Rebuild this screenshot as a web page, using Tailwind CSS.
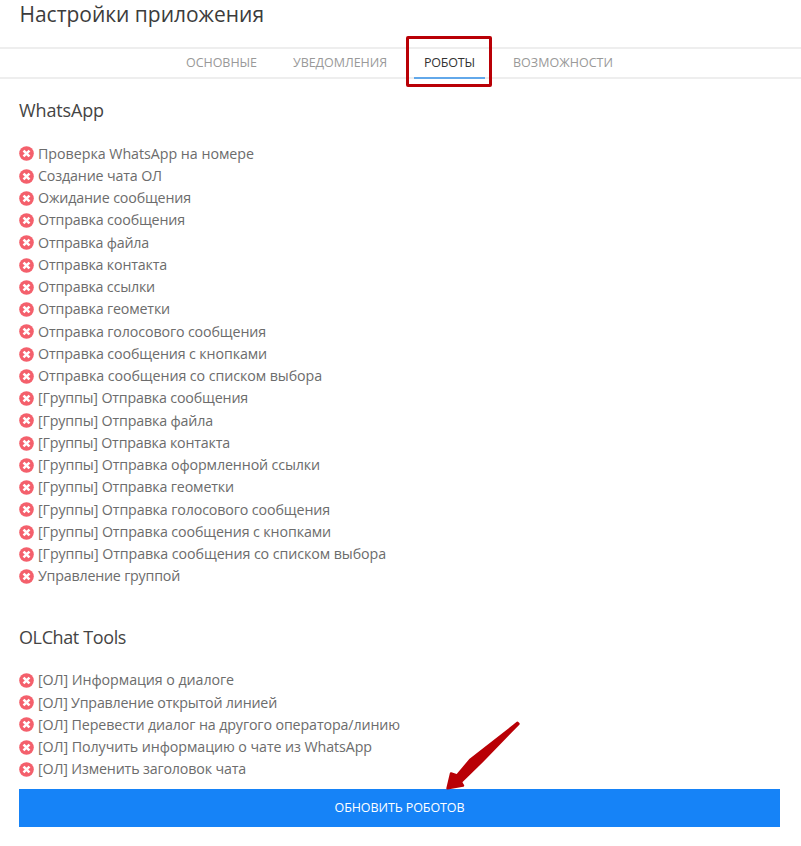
<!DOCTYPE html>
<html lang="ru">
<head>
<meta charset="utf-8">
<title>Настройки приложения</title>
<script src="https://cdn.jsdelivr.net/npm/@tailwindcss/browser@4"></script>
</head>
<body class="bg-white w-[801px] h-[846px] overflow-hidden relative font-['Open_Sans','Noto_Sans',sans-serif] text-[#6c6c6c]">
<svg class="hidden"><symbol id="x" viewBox="0 0 15 15"><circle cx="7.5" cy="7.5" r="7.3" fill="#f4606c"/><path d="M5.4 5.4l4.2 4.2M9.6 5.4l-4.2 4.2" stroke="#fff" stroke-width="2.5" stroke-linecap="square"/></symbol></svg>
<h1 class="h-[47px] pl-[19.5px] text-[21px] leading-[29px] text-[#3c3c3c] whitespace-nowrap"><span data-w="244.5">Настройки приложения</span></h1>
<nav class="h-[32px] border-y-2 border-[#eeeeee] flex pl-[186px] text-[12.5px] leading-[27px] text-[#999] whitespace-nowrap">
<div class="w-[107px]"><span data-w="71">ОСНОВНЫЕ</span></div>
<div class="w-[121px]"><span data-w="94">УВЕДОМЛЕНИЯ</span></div>
<div class="w-[71px] h-[30px] border-b-2 border-[#62a8ea] pl-[10px] text-[#333]"><span data-w="51">РОБОТЫ</span></div>
<div class="pl-[28px]"><span data-w="100">ВОЗМОЖНОСТИ</span></div>
</nav>
<main class="px-[19px] whitespace-nowrap">
<h2 class="mt-[19px] h-[44.7px] text-[18px] leading-[25px] text-[#444]"><span data-w="85">WhatsApp</span></h2>
<ul id="whatsapp" class="text-[14.25px] leading-[22.25px]"></ul>
<h2 class="mt-[36.6px] h-[45px] text-[18px] leading-[26px] text-[#444]"><span data-w="107">OLChat Tools</span></h2>
<ul id="tools" class="text-[14.25px] leading-[22.25px]"></ul>
<button class="mt-[8px] block w-[761px] h-[38px] bg-[#1683f7] text-white text-[12.5px] leading-[37px] text-center"><span data-w="130">ОБНОВИТЬ РОБОТОВ</span></button>
</main>
<div class="absolute left-[406px] top-[36px] w-[86px] h-[51px] border-3 border-[#b90006] rounded-[2px]"></div>
<svg class="absolute left-[430px] top-[710px]" width="100" height="90"><path d="M87.5 12.8L40 50L27 65.5L21 63.5L17.5 78.3L33 75.5L31 72L52 51.5L88.5 13.8Z" fill="#b90006" stroke="#b90006" stroke-width="2.4" stroke-linejoin="round"/></svg>
<script>
const lists = {
whatsapp: [["Проверка WhatsApp на номере",216],["Создание чата ОЛ",124],["Ожидание сообщения",153],["Отправка сообщения",147],["Отправка файла",111],["Отправка контакта",129],["Отправка ссылки",117],["Отправка геометки",132],["Отправка голосового сообщения",228],["Отправка сообщения с кнопками",229],["Отправка сообщения со списком выбора",284],["[Группы] Отправка сообщения",210],["[Группы] Отправка файла",175],["[Группы] Отправка контакта",192],["[Группы] Отправка оформленной ссылки",282],["[Группы] Отправка геометки",196],["[Группы] Отправка голосового сообщения",292],["[Группы] Отправка сообщения с кнопками",293],["[Группы] Отправка сообщения со списком выбора",348],["Управление группой",142]],
tools: [["[ОЛ] Информация о диалоге",196],["[ОЛ] Управление открытой линией",239],["[ОЛ] Перевести диалог на другого оператора/линию",362],["[ОЛ] Получить информацию о чате из WhatsApp",334],["[ОЛ] Изменить заголовок чата",208]]};
for (const id in lists) for (const [label, width] of lists[id])
  document.getElementById(id).insertAdjacentHTML('beforeend', `<li class="flex items-center h-[22.25px]"><svg class="w-[15px] h-[15px] mr-[4px] shrink-0"><use href="#x"/></svg><span data-w="${width}">${label}</span></li>`);
// Track each label to its design width once styles and fonts are ready.
const fit = () => document.querySelectorAll('[data-w]').forEach(e => {
  e.style.letterSpacing = '0px';
  const w = e.getBoundingClientRect().width;
  e.style.letterSpacing = (e.dataset.w - w) / e.textContent.length + 'px';
});
window.addEventListener('load', () => { fit(); document.fonts.ready.then(fit); requestAnimationFrame(fit); });
</script>
</body>
</html>
